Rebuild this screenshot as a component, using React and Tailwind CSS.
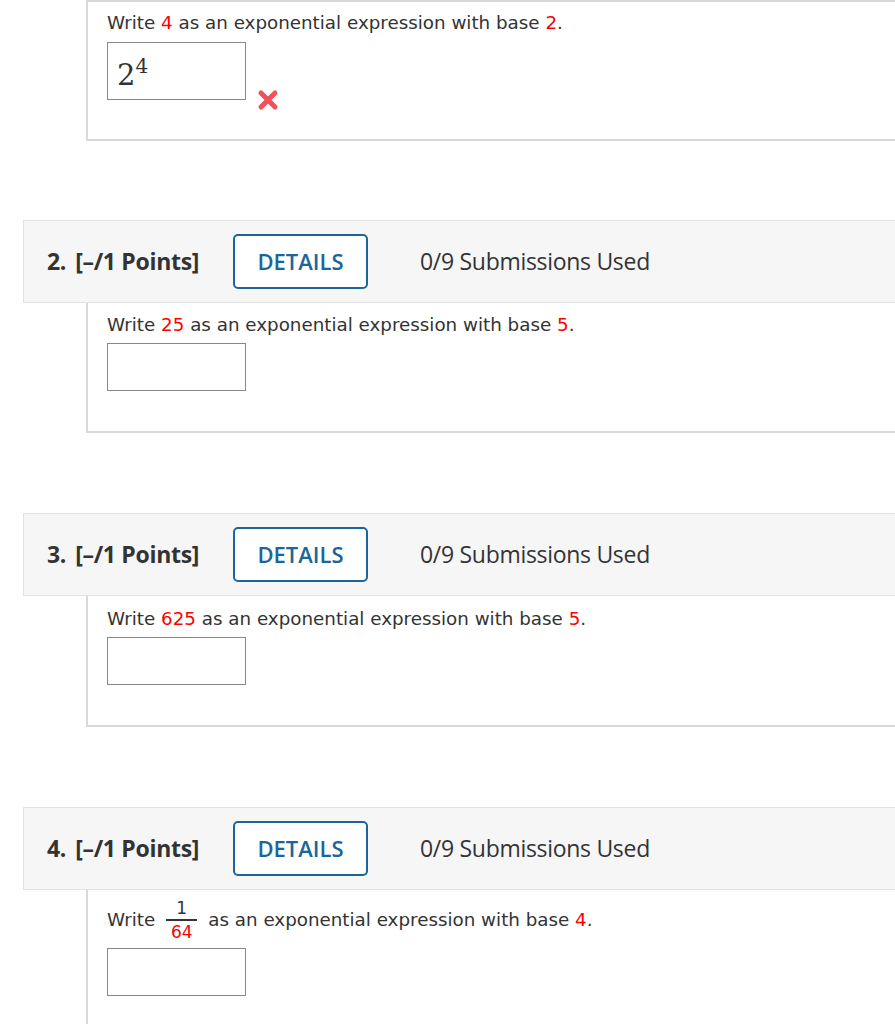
import React from 'react';

const bodyFont = { fontFamily: '"DejaVu Sans", Verdana, sans-serif' };

function Red({ children }) {
  return <span className="text-[#ff0000]">{children}</span>;
}

function Header({ num }) {
  return (
    <div
      className="ml-[23px] h-[83px] flex items-center border border-r-0 border-[#e2e2e2] bg-[#f6f6f6] pl-[23px] text-[#333] text-[23px] tracking-[-0.3px]"
      style={{ fontFamily: '"Open Sans", sans-serif' }}
    >
      <span className="font-bold w-[186px]">
        {num}.<span className="ml-[9px]">[–/1 Points]</span>
      </span>
      <div className="w-[135px] h-[55px] border-2 border-[#1b6699] rounded-[5px] bg-white flex items-center justify-center text-[#1b6699] font-semibold text-[22px] tracking-normal">
        DETAILS
      </div>
      <span className="ml-[52px]">0/9 Submissions Used</span>
    </div>
  );
}

function Body({ children, className = '' }) {
  return (
    <div
      className={`ml-[86px] border-l-2 border-b-2 border-[#d9d9d9] pl-[19px] text-[#333] text-[18.3px] ${className}`}
      style={bodyFont}
    >
      {children}
    </div>
  );
}

function AnswerBox({ children, tall }) {
  return (
    <div
      className={`w-[139px] ${tall ? 'h-[58px]' : 'h-[48px]'} border border-[#888] bg-white px-[9px]`}
    >
      {children}
    </div>
  );
}

export default function App() {
  return (
    <div className="w-[895px] bg-white overflow-hidden">
      {/* question 1 tail */}
      <Body className="border-t-2 h-[141px] pt-[7px]">
        <div className="leading-[28px]">
          Write <Red>4</Red> as an exponential expression with base <Red>2</Red>.
        </div>
        <div className="flex items-end mt-[5px]">
          <AnswerBox tall>
            <div
              className="pt-[18px] text-[29px] text-[#333] leading-none"
              style={{ fontFamily: '"DejaVu Serif", "Liberation Serif", serif' }}
            >
              2<span className="text-[20px] relative -top-[12px]">4</span>
            </div>
          </AnswerBox>
          <svg width="22" height="22" viewBox="0 0 22 22" className="ml-[11px] -mb-[11px]">
            <path d="M4 4 L18 18 M18 4 L4 18" stroke="#f0515a" strokeWidth="5" strokeLinecap="round" />
          </svg>
        </div>
      </Body>

      <div className="h-[79px]" />
      <Header num={2} />
      <Body className="h-[130px] pt-[8px]">
        <div className="leading-[28px]">
          Write <Red>25</Red> as an exponential expression with base <Red>5</Red>.
        </div>
        <div className="mt-[4px]">
          <AnswerBox />
        </div>
      </Body>

      <div className="h-[80px]" />
      <Header num={3} />
      <Body className="h-[131px] pt-[9px]">
        <div className="leading-[28px]">
          Write <Red>625</Red> as an exponential expression with base <Red>5</Red>.
        </div>
        <div className="mt-[4px]">
          <AnswerBox />
        </div>
      </Body>

      <div className="h-[80px]" />
      <Header num={4} />
      <Body className="h-[160px] pt-[9px]">
        <div className="flex items-center leading-[28px]">
          <span>Write</span>
          <span className="inline-flex flex-col items-center mx-[11px] text-[17px] leading-[18px]">
            <span className="px-[3px]">1</span>
            <span className="w-[31px] h-[2px] bg-[#333] my-[2px]" />
            <Red>64</Red>
          </span>
          <span>
            as an exponential expression with base <Red>4</Red>.
          </span>
        </div>
        <div className="mt-[7px]">
          <AnswerBox />
        </div>
      </Body>
    </div>
  );
}
